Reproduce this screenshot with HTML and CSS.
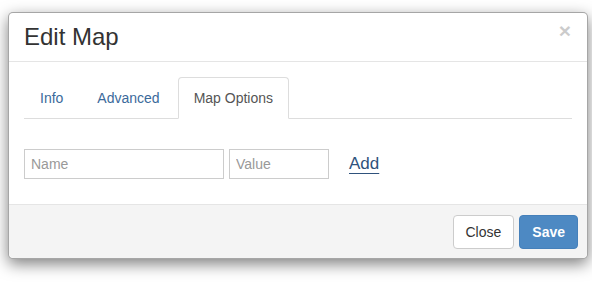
FILE: index.html
```html
<!DOCTYPE html>
<html>
<head>
<meta charset="utf-8">
<link rel="stylesheet" href="styles.css">
</head>
<body>
<div class="page">
<div class="modal">
  <div class="modal-header">
    <span class="close">×</span>
    <h4 class="modal-title">Edit Map</h4>
  </div>
  <div class="modal-body">
    <ul class="nav-tabs">
      <li><a>Info</a></li>
      <li><a>Advanced</a></li>
      <li class="active"><a>Map Options</a></li>
    </ul>
    <div class="tab-pane">
      <input class="input input-name" placeholder="Name">
      <input class="input input-value" placeholder="Value">
      <a class="add">Add</a>
    </div>
  </div>
  <div class="modal-footer">
    <button class="btn btn-default">Close</button>
    <button class="btn btn-primary">Save</button>
  </div>
</div>
</div>
</body>
</html>
```
FILE: styles.css
```css
* { box-sizing: border-box; }
html, body { margin: 0; padding: 0; background: #fff; }
body {
  font-family: "Liberation Sans", Arial, sans-serif;
  font-size: 14px;
  line-height: 20px;
  color: #333;
}
.page {
  min-height: 295px;
  padding: 12px 0 0 8px;
}
.modal {
  width: 580px;
  background: #fff;
  border: 1px solid rgba(0,0,0,.35);
  border-radius: 5px;
  box-shadow: 0 5px 15px rgba(0,0,0,.5);
}
.modal-header {
  padding: 11px 15px;
  border-bottom: 1px solid #e5e5e5;
}
.modal-title {
  margin: 0;
  font-size: 24px;
  font-weight: normal;
  line-height: 26px;
  color: #333;
}
.close {
  float: right;
  font-size: 21px;
  font-weight: bold;
  line-height: 1;
  color: #000;
  opacity: .2;
  margin-top: -4px;
  margin-right: 1px;
}
.modal-body {
  padding: 15px 15px 15px;
}
.nav-tabs {
  list-style: none;
  margin: 0;
  padding: 0;
  display: flex;
  border-bottom: 1px solid #ddd;
}
.nav-tabs li {
  margin-right: 2px;
  margin-bottom: -1px;
}
.nav-tabs a {
  display: block;
  padding: 10px 15px;
  border: 1px solid transparent;
  border-radius: 4px 4px 0 0;
  color: #3b6a9b;
  line-height: 20px;
}
.nav-tabs .active a {
  color: #555;
  background: #fff;
  border-color: #ddd #ddd transparent;
}
.tab-pane {
  padding-top: 30px;
  margin-bottom: 10px;
  display: flex;
  align-items: center;
}
.input {
  height: 30px;
  border: 1px solid #ccc;
  padding: 4px 6px;
  font-family: inherit;
  font-size: 14px;
  color: #555;
  border-radius: 0;
  margin: 0 5px 0 0;
}
.input::placeholder { color: #999; opacity: 1; }
.input-name { width: 200px; }
.input-value { width: 100px; }
.add {
  margin-left: 15px;
  font-size: 17px;
  color: #2f527c;
  text-decoration: underline;
  text-underline-offset: 4px;
  line-height: 20px;
  margin-top: -1px;
}
.modal-footer {
  padding: 10px 9px 9px;
  background: #f4f4f4;
  border-top: 1px solid #e5e5e5;
  border-radius: 0 0 5px 5px;
  display: flex;
  justify-content: flex-end;
  gap: 5px;
}
.btn {
  font-family: inherit;
  font-size: 14px;
  line-height: 20px;
  padding: 6px 12px;
  border: 1px solid #ccc;
  border-radius: 4px;
  height: 34px;
}
.btn-default { background: #fff; color: #333; }
.btn-primary {
  background: #4d89c3;
  border-color: #4580ba;
  color: #fff;
  font-weight: bold;
}
```
